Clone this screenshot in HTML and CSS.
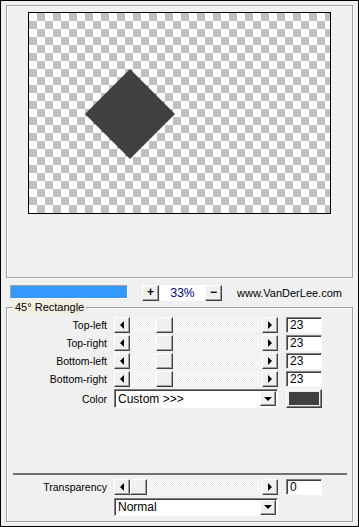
FILE: index.html
```html
<!DOCTYPE html>
<html lang="en">
<head>
    <meta charset="UTF-8">
    <title>45° Rectangle</title>
    <link rel="stylesheet" href="styles.css">
</head>
<body>
    <div class="window">
        <div class="preview">
            <div class="canvas">
                <svg width="301" height="200" viewBox="0 0 301 200">
                    <polygon points="101,56 146,101 101,146 56,101" fill="#404040"/>
                </svg>
            </div>
        </div>

        <div class="zoom-row">
            <div class="progress"><div class="progress-fill"></div></div>
            <div class="btn">+</div>
            <div class="zoom-value">33%</div>
            <div class="btn">&minus;</div>
            <span class="url">www.VanDerLee.com</span>
        </div>

        <div class="group">
            <span class="group-title">45° Rectangle</span>

            <div class="row">
                <span class="label">Top-left</span>
                <div class="scroll">
                    <span class="arrow"><span class="tri-left"></span></span>
                    <div class="track"><span class="thumb" style="margin-left:26px"></span></div>
                    <span class="arrow"><span class="tri-right"></span></span>
                </div>
                <div class="field">23</div>
            </div>
            <div class="row">
                <span class="label">Top-right</span>
                <div class="scroll">
                    <span class="arrow"><span class="tri-left"></span></span>
                    <div class="track"><span class="thumb" style="margin-left:26px"></span></div>
                    <span class="arrow"><span class="tri-right"></span></span>
                </div>
                <div class="field">23</div>
            </div>
            <div class="row">
                <span class="label">Bottom-left</span>
                <div class="scroll">
                    <span class="arrow"><span class="tri-left"></span></span>
                    <div class="track"><span class="thumb" style="margin-left:26px"></span></div>
                    <span class="arrow"><span class="tri-right"></span></span>
                </div>
                <div class="field">23</div>
            </div>
            <div class="row">
                <span class="label">Bottom-right</span>
                <div class="scroll">
                    <span class="arrow"><span class="tri-left"></span></span>
                    <div class="track"><span class="thumb" style="margin-left:26px"></span></div>
                    <span class="arrow"><span class="tri-right"></span></span>
                </div>
                <div class="field">23</div>
            </div>

            <div class="row color-row">
                <span class="label">Color</span>
                <div class="combo">
                    <span class="combo-text">Custom &gt;&gt;&gt;</span>
                    <span class="combo-btn"><span class="tri-down"></span></span>
                </div>
                <div class="swatch"></div>
            </div>

            <div class="separator"></div>

            <div class="row transparency-row">
                <span class="label">Transparency</span>
                <div class="scroll">
                    <span class="arrow"><span class="tri-left"></span></span>
                    <div class="track"><span class="thumb" style="margin-left:0"></span></div>
                    <span class="arrow"><span class="tri-right"></span></span>
                </div>
                <div class="field">0</div>
            </div>
            <div class="row mode-row">
                <span class="label"></span>
                <div class="combo">
                    <span class="combo-text">Normal</span>
                    <span class="combo-btn"><span class="tri-down"></span></span>
                </div>
            </div>
        </div>
    </div>
</body>
</html>
```

FILE: styles.css
```css
* {
    box-sizing: border-box;
}
body {
    margin: 0;
    background-color: #f0f0f0;
    font-family: "Liberation Sans", Arial, sans-serif;
    font-size: 11px;
    color: #000;
}
.window {
    width: 359px;
    height: 527px;
    border: 1px solid #000;
    padding: 4px 0 0 5px;
}

/* preview */
.preview {
    width: 347px;
    height: 273px;
    border: 1px solid #a0a0a0;
    box-shadow: 1px 1px 0 #fff, inset 1px 1px 0 #fff;
    padding: 6px 0 0 21px;
}
.canvas {
    width: 303px;
    height: 202px;
    border: 1px solid #000;
    background-color: #fff;
    background-image: conic-gradient(#c0c0c0 25%, #fff 0 50%, #c0c0c0 0 75%, #fff 0);
    background-size: 16px 16px;
}
.canvas svg {
    display: block;
}

/* zoom bar */
.zoom-row {
    display: flex;
    align-items: flex-start;
    height: 16px;
    margin-top: 7px;
    padding-left: 4px;
}
.progress {
    width: 118px;
    height: 14px;
    border: 1px solid;
    border-color: #a0a0a0 #fff #fff #a0a0a0;
    margin-right: 14px;
}
.progress-fill {
    width: 100%;
    height: 100%;
    background-color: #3399ff;
}
.btn {
    width: 17px;
    height: 16px;
    border: 1px solid;
    border-color: #fff #404040 #404040 #fff;
    box-shadow: inset -1px -1px 0 #a0a0a0;
    font-weight: bold;
    font-size: 12px;
    line-height: 13px;
    text-align: center;
}
.zoom-value {
    width: 45px;
    height: 16px;
    margin-left: 1px;
    background-color: #fff;
    color: #000080;
    font-size: 12px;
    line-height: 16px;
    text-align: center;
}
.url {
    margin-left: 15px;
    line-height: 16px;
}

/* group box */
.group {
    position: relative;
    width: 347px;
    height: 215px;
    margin-top: 6px;
    border: 1px solid #a0a0a0;
    box-shadow: 1px 1px 0 #fff, inset 1px 1px 0 #fff;
    padding-top: 9px;
}
.group-title {
    position: absolute;
    left: 6px;
    top: -7px;
    padding: 0 2px;
    background-color: #f2eee0;
    line-height: 13px;
}
.row {
    display: flex;
    align-items: center;
    height: 16px;
    margin-bottom: 2px;
}
.label {
    width: 100px;
    margin-right: 7px;
    text-align: right;
    font-size: 10.5px;
}
.scroll {
    display: flex;
    width: 164px;
    height: 16px;
}
.arrow {
    display: flex;
    align-items: center;
    justify-content: center;
    width: 16px;
    height: 16px;
    border: 1px solid;
    border-color: #fff #404040 #404040 #fff;
    box-shadow: inset -1px -1px 0 #a0a0a0;
    background-color: #f0f0f0;
}
.tri-left {
    border-right: 4px solid #000;
    border-top: 4px solid transparent;
    border-bottom: 4px solid transparent;
}
.tri-right {
    border-left: 4px solid #000;
    border-top: 4px solid transparent;
    border-bottom: 4px solid transparent;
}
.tri-down {
    border-top: 4px solid #000;
    border-left: 4px solid transparent;
    border-right: 4px solid transparent;
}
.track {
    flex: 1;
    display: flex;
    background: repeating-conic-gradient(#ebebeb 0 25%, #fff 0 50%) 0 0 / 2px 2px;
}
.thumb {
    display: block;
    width: 17px;
    height: 16px;
    border: 1px solid;
    border-color: #fff #404040 #404040 #fff;
    box-shadow: inset -1px -1px 0 #a0a0a0;
    background-color: #f0f0f0;
}
.field {
    width: 36px;
    height: 16px;
    margin-left: 8px;
    border: 1px solid;
    border-color: #808080 #fff #fff #808080;
    box-shadow: inset 1px 1px 0 #404040;
    background-color: #fff;
    padding-left: 3px;
    font-size: 12px;
    line-height: 14px;
}

/* combo boxes */
.color-row {
    height: 19px;
}
.combo {
    display: flex;
    align-items: center;
    justify-content: space-between;
    width: 164px;
    height: 19px;
    border: 1px solid;
    border-color: #808080 #fff #fff #808080;
    box-shadow: inset 1px 1px 0 #404040;
    background-color: #fff;
    padding: 1px 1px 1px 3px;
}
.combo-text {
    font-size: 12px;
}
.combo-btn {
    display: flex;
    align-items: center;
    justify-content: center;
    width: 16px;
    height: 15px;
    border: 1px solid;
    border-color: #fff #404040 #404040 #fff;
    box-shadow: inset -1px -1px 0 #a0a0a0;
    background-color: #f0f0f0;
}
.swatch {
    width: 36px;
    height: 19px;
    margin-left: 8px;
    border: 1px solid;
    border-color: #fff #404040 #404040 #fff;
    box-shadow: inset -1px -1px 0 #808080;
    background-color: #404040;
    background-clip: content-box;
    padding: 2px;
}
.separator {
    width: 334px;
    height: 2px;
    margin: 65px 0 4px 6px;
    background-color: #707070;
}
.transparency-row {
    margin-bottom: 3px;
}
.mode-row {
    height: 18px;
}
.mode-row .combo {
    height: 18px;
}
```
